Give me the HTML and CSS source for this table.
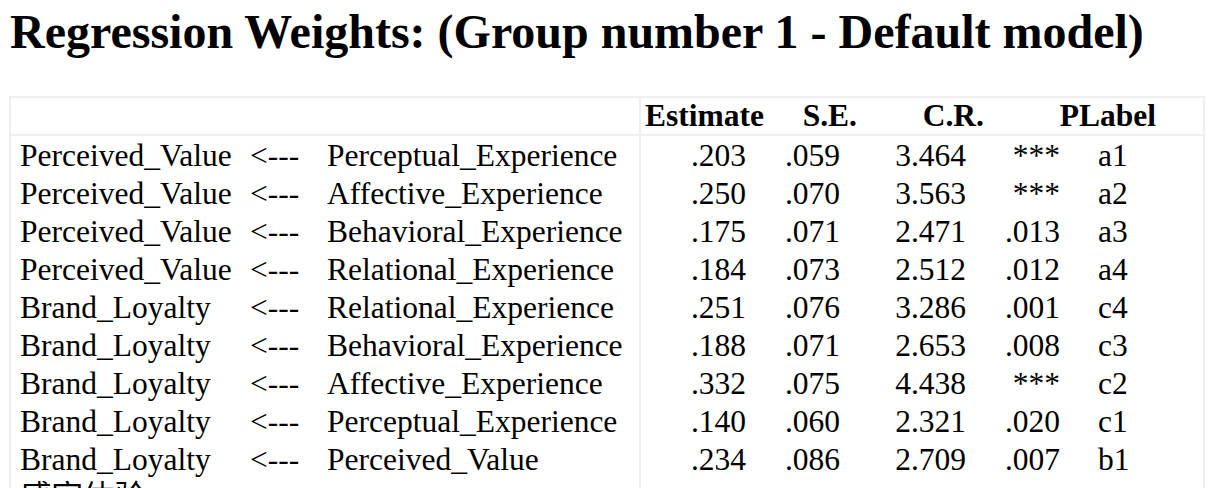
FILE: index.html
```html
<!DOCTYPE html>
<html lang="en">
<head>
<meta charset="utf-8">
<title>Regression Weights</title>
<link rel="stylesheet" href="styles.css">
</head>
<body>
<h1 class="title">Regression Weights: (Group number 1 - Default model)</h1>
<div class="table">
  <div class="cell head-left"></div>
  <div class="cell head-right">
    <div class="hrow">
      <span class="h est">Estimate</span>
      <span class="h se">S.E.</span>
      <span class="h cr">C.R.</span>
      <span class="h p">P</span>
      <span class="h lab">Label</span>
    </div>
  </div>
  <div class="cell body-left">
    <div class="prow"><span class="dv">Perceived_Value</span><span class="arr">&lt;---</span><span class="iv">Perceptual_Experience</span></div>
    <div class="prow"><span class="dv">Perceived_Value</span><span class="arr">&lt;---</span><span class="iv">Affective_Experience</span></div>
    <div class="prow"><span class="dv">Perceived_Value</span><span class="arr">&lt;---</span><span class="iv">Behavioral_Experience</span></div>
    <div class="prow"><span class="dv">Perceived_Value</span><span class="arr">&lt;---</span><span class="iv">Relational_Experience</span></div>
    <div class="prow"><span class="dv">Brand_Loyalty</span><span class="arr">&lt;---</span><span class="iv">Relational_Experience</span></div>
    <div class="prow"><span class="dv">Brand_Loyalty</span><span class="arr">&lt;---</span><span class="iv">Behavioral_Experience</span></div>
    <div class="prow"><span class="dv">Brand_Loyalty</span><span class="arr">&lt;---</span><span class="iv">Affective_Experience</span></div>
    <div class="prow"><span class="dv">Brand_Loyalty</span><span class="arr">&lt;---</span><span class="iv">Perceptual_Experience</span></div>
    <div class="prow"><span class="dv">Brand_Loyalty</span><span class="arr">&lt;---</span><span class="iv">Perceived_Value</span></div>
    <div class="prow"><span class="dv">感官体验</span><span class="arr"></span><span class="iv"></span></div>
  </div>
  <div class="cell body-right">
    <div class="drow"><span class="n est">.203</span><span class="n se">.059</span><span class="n cr">3.464</span><span class="n p">***</span><span class="n lab">a1</span></div>
    <div class="drow"><span class="n est">.250</span><span class="n se">.070</span><span class="n cr">3.563</span><span class="n p">***</span><span class="n lab">a2</span></div>
    <div class="drow"><span class="n est">.175</span><span class="n se">.071</span><span class="n cr">2.471</span><span class="n p">.013</span><span class="n lab">a3</span></div>
    <div class="drow"><span class="n est">.184</span><span class="n se">.073</span><span class="n cr">2.512</span><span class="n p">.012</span><span class="n lab">a4</span></div>
    <div class="drow"><span class="n est">.251</span><span class="n se">.076</span><span class="n cr">3.286</span><span class="n p">.001</span><span class="n lab">c4</span></div>
    <div class="drow"><span class="n est">.188</span><span class="n se">.071</span><span class="n cr">2.653</span><span class="n p">.008</span><span class="n lab">c3</span></div>
    <div class="drow"><span class="n est">.332</span><span class="n se">.075</span><span class="n cr">4.438</span><span class="n p">***</span><span class="n lab">c2</span></div>
    <div class="drow"><span class="n est">.140</span><span class="n se">.060</span><span class="n cr">2.321</span><span class="n p">.020</span><span class="n lab">c1</span></div>
    <div class="drow"><span class="n est">.234</span><span class="n se">.086</span><span class="n cr">2.709</span><span class="n p">.007</span><span class="n lab">b1</span></div>
  </div>
</div>
</body>
</html>
```
FILE: styles.css
```css
html, body {
  margin: 0;
  padding: 0;
  background: #ffffff;
  overflow: hidden;
}

body {
  font-family: "Liberation Serif", "Times New Roman", "Noto Sans CJK SC", serif;
  color: #000000;
  padding: 4px 9px 0 9px;
}

.title {
  margin: 0;
  font-size: 48px;
  font-weight: bold;
  line-height: 55px;
  padding-left: 1px;
}

.table {
  margin-top: 37px;
  display: grid;
  grid-template-columns: 630px 1fr;
  border: 2px solid #efefef;
  width: 1196px;
  box-sizing: border-box;
  font-size: 31.5px;
}

.cell {
  box-sizing: border-box;
}

.head-left {
  border-right: 2px solid #efefef;
  border-bottom: 2px solid #efefef;
}

.head-right {
  border-bottom: 2px solid #efefef;
  height: 38px;
}

.body-left {
  border-right: 2px solid #efefef;
  padding: 1px 0 0 9px;
}

.body-right {
  padding-top: 1px;
}

.hrow {
  display: grid;
  grid-template-columns: 123px 93px 127px 95px auto;
  font-weight: bold;
  line-height: 36px;
}

.h {
  text-align: right;
}

.h.lab {
  text-align: left;
}

.prow {
  display: grid;
  grid-template-columns: 230px 77px auto;
  line-height: 38px;
  white-space: nowrap;
}

.prow .dv,
.prow .iv {
  font-family: "Liberation Serif", "Noto Sans CJK SC", serif;
}

.drow {
  display: grid;
  grid-template-columns: 105px 94px 126px 94px auto;
  line-height: 38px;
}

.n {
  text-align: right;
}

.n.lab {
  text-align: left;
  padding-left: 38px;
}
```
